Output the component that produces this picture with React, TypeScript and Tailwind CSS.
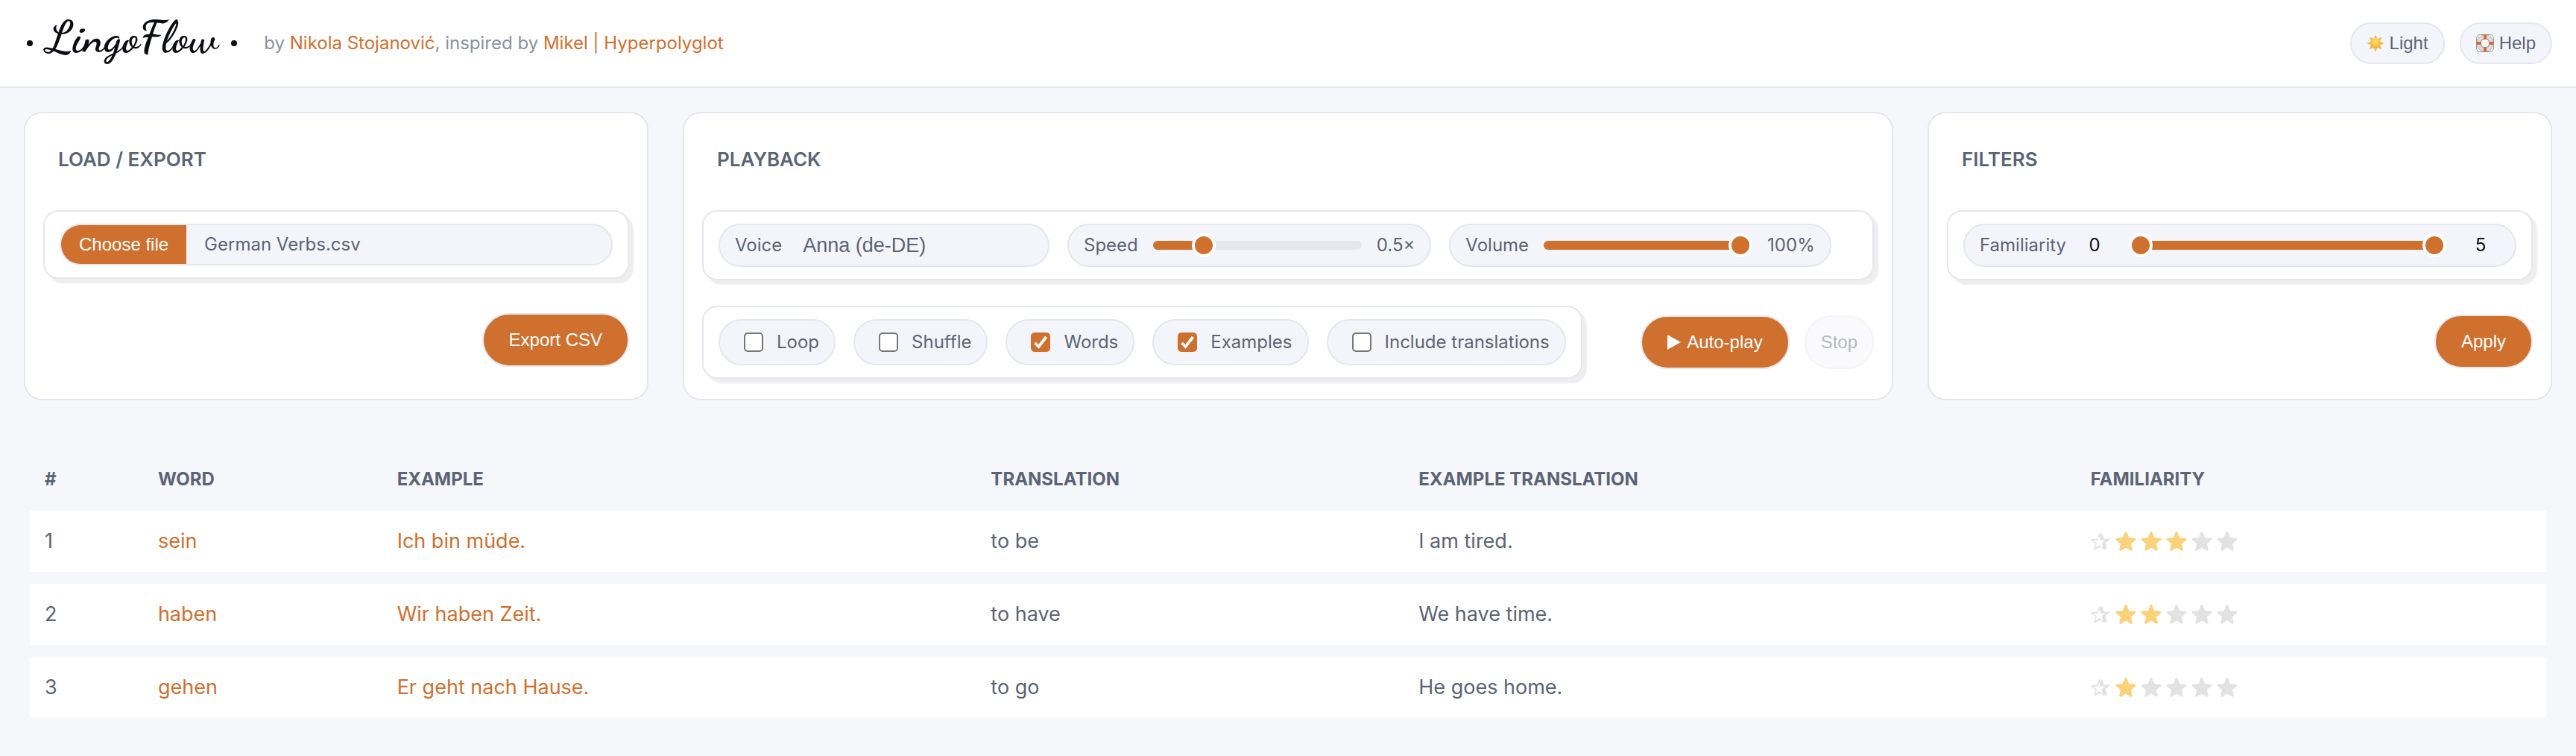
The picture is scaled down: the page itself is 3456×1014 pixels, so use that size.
import { useState } from "react";
import type { CSSProperties, ReactNode } from "react";

const STAR =
  "M12 1c.6 0 1 .4 1.200.9l2.400 6 6.500.5c1.200.1 1.600 1.500.7 2.300l-5 4.200 1.600 6.300c.3 1.200-.9 2-1.900 1.400L12 19.200l-5.500 3.400c-1 .6-2.200-.2-1.900-1.400l1.600-6.300-5-4.200c-.9-.8-.5-2.200.7-2.300l6.500-.5 2.400-6c.2-.5.6-.9 1.200-.9z";

function SunIcon() {
  const rays = [0, 45, 90, 135, 180, 225, 270, 315];
  return (
    <svg viewBox="0 0 24 24" className="size-6" aria-hidden="true">
      <defs>
        <radialGradient id="sun" cx="50%" cy="35%" r="65%">
          <stop offset="0" stopColor="#fde76a" />
          <stop offset="1" stopColor="#f2ae2e" />
        </radialGradient>
      </defs>
      {rays.map((r) => (
        <path key={r} d="M12 .3 14.200 5.200H9.800Z" fill="#efb65e" transform={`rotate(${r} 12 12)`} />
      ))}
      <circle cx="12" cy="12" r="7" fill="url(#sun)" />
    </svg>
  );
}

function LifebuoyIcon() {
  return (
    <svg viewBox="0 0 24 24" className="size-6" aria-hidden="true">
      <rect x=".6" y=".6" width="22.800" height="22.800" rx="5" fill="#fff" stroke="#8f8f8f" strokeWidth="1" />
      <circle cx="12" cy="12" r="8.300" fill="none" stroke="#8f8f8f" strokeWidth="6.400" />
      <circle cx="12" cy="12" r="8.500" fill="none" stroke="#dedede" strokeWidth="5" />
      <circle cx="12" cy="12" r="6.200" fill="none" stroke="#a8a8a8" strokeWidth="1.200" />
      <circle cx="12" cy="12" r="5.200" fill="#f8f8fb" />
      <path d="M10 .8h4v6h-4zM10 17.200h4v6h-4zM.8 10h6v4H.8zM17.200 10h6v4h-6z" fill="#e2642f" />
    </svg>
  );
}

function Star({ on }: { on: boolean }) {
  return (
    <svg viewBox="1 1 22 22" className="size-[26px] overflow-visible" aria-hidden="true">
      <path d={STAR} fill={on ? "#f9d279" : "#e2e2e2"} />
    </svg>
  );
}

function ShadowedStar() {
  const star = "M10.500 2.500 12.800 9.300H20L14.300 13.500 16.400 20.500 10.500 16.300 4.600 20.500 6.700 13.500 1 9.300H8.200Z";
  return (
    <svg viewBox="0 0 24 24" className="size-[26px]" aria-hidden="true">
      <path d={star} fill="#e2e2e2" stroke="#e2e2e2" strokeWidth="1" transform="translate(3.200 .2)" />
      <path d={star} fill="#e2e2e2" stroke="#e2e2e2" strokeWidth="1" transform="translate(1.500 .8)" />
      <path d={star} fill="#fff" stroke="#e2e2e2" strokeWidth="1.300" transform="translate(0 1)" />
    </svg>
  );
}

function Card({ title, children }: { title: string; children: ReactNode }) {
  return (
    <section className="flex min-w-0 flex-col rounded-3xl border-2 border-[#e4e7ee] bg-white px-6 pt-6 pb-[27px]">
      <h2 className="mb-[30px] px-5 py-5 text-[26px] leading-9 font-semibold uppercase">{title}</h2>
      {children}
    </section>
  );
}

function Panel({ children }: { children: ReactNode }) {
  return (
    <div className="flex flex-wrap gap-6 rounded-[20px] border-2 border-[#e4e7ee] bg-white px-5 py-4 shadow-[6px_6px_2px_#eeeeee]">
      {children}
    </div>
  );
}

const pill = "flex items-center rounded-full border-2 border-[#e4e7ee] bg-[#f4f5fb]";
const primary =
  "flex h-[72px] items-center justify-center gap-2 rounded-full border-2 border-[#e4e7ee] bg-[#cf702e] px-[34px] font-['Liberation_Sans',sans-serif] text-2xl text-white";
const thumb =
  "[&::-webkit-slider-thumb]:size-8 [&::-webkit-slider-thumb]:appearance-none [&::-webkit-slider-thumb]:rounded-full [&::-webkit-slider-thumb]:border-4 [&::-webkit-slider-thumb]:border-white [&::-webkit-slider-thumb]:bg-[#cf702e]";

type RangeProps = {
  id: string;
  label: string;
  min: number;
  max: number;
  step: number;
  initial: number;
  format: (v: number) => string;
};

function RangePill({ id, label, min, max, step, initial, format }: RangeProps) {
  const [value, setValue] = useState(initial);
  const fill = { "--fill": `${((value - min) / (max - min)) * 100}%` } as CSSProperties;
  return (
    <div className={`${pill} h-[58px] gap-5 px-5`}>
      <label htmlFor={id}>{label}</label>
      <input
        id={id}
        type="range"
        min={min}
        max={max}
        step={step}
        value={value}
        onChange={(e) => setValue(Number(e.target.value))}
        style={fill}
        className={`h-8 w-[280px] appearance-none bg-transparent [&::-webkit-slider-runnable-track]:h-3 [&::-webkit-slider-runnable-track]:rounded-full [&::-webkit-slider-runnable-track]:bg-[linear-gradient(to_right,#cf702e_var(--fill),#e4e7ee_var(--fill))] [&::-webkit-slider-thumb]:-mt-[10px] ${thumb}`}
      />
      <output htmlFor={id}>{format(value)}</output>
    </div>
  );
}

function CheckPill({ label, initial = false }: { label: string; initial?: boolean }) {
  const [on, setOn] = useState(initial);
  return (
    <label className={`${pill} h-[62px] gap-[18px] pr-5 pl-8`}>
      <span className="grid size-[26px] *:[grid-area:1/1]">
        <input
          type="checkbox"
          checked={on}
          onChange={(e) => setOn(e.target.checked)}
          className="size-[26px] appearance-none rounded-[5px] border-2 border-[#767676] bg-white checked:border-[#cf702e] checked:bg-[#cf702e]"
        />
        {on && (
          <svg viewBox="0 0 26 26" className="pointer-events-none size-[26px]" aria-hidden="true">
            <path d="M5.500 14 10.500 19 20.500 6" fill="none" stroke="#fff" strokeWidth="3.800" />
          </svg>
        )}
      </span>
      {label}
    </label>
  );
}

function FamiliarityFilter() {
  const [low, setLow] = useState(0);
  const [high, setHigh] = useState(5);
  const number = "w-[52px] bg-transparent text-center text-[#0b0d12]";
  const range = `pointer-events-none h-8 w-full appearance-none bg-transparent [&::-webkit-slider-thumb]:pointer-events-auto ${thumb}`;
  return (
    <div className={`${pill} h-[58px] w-full px-5`}>
      <label htmlFor="fam-min" className="mr-3">
        Familiarity
      </label>
      <input id="fam-min" className={number} value={low} onChange={(e) => setLow(Number(e.target.value) || 0)} />
      <div className="mx-5 grid flex-1 items-center *:[grid-area:1/1]">
        <div className="mx-4 h-3 rounded-full bg-[#e4e7ee]">
          <div
            className="h-3 bg-[#cf702e]"
            style={{ marginLeft: `${low * 20}%`, width: `${Math.max(0, high - low) * 20}%` }}
          />
        </div>
        <input
          type="range"
          aria-label="Minimum familiarity"
          min={0}
          max={5}
          value={low}
          onChange={(e) => setLow(Math.min(Number(e.target.value), high))}
          className={range}
        />
        <input
          type="range"
          aria-label="Maximum familiarity"
          min={0}
          max={5}
          value={high}
          onChange={(e) => setHigh(Math.max(Number(e.target.value), low))}
          className={range}
        />
      </div>
      <input
        aria-label="Highest familiarity"
        className={number}
        value={high}
        onChange={(e) => setHigh(Number(e.target.value) || 0)}
      />
    </div>
  );
}

const columns = [
  { name: "#", width: "w-[4.5%]" },
  { name: "Word", width: "w-[9.5%]" },
  { name: "Example", width: "w-[23.6%]" },
  { name: "Translation", width: "w-[17%]" },
  { name: "Example translation", width: "w-[26.7%]" },
  { name: "Familiarity", width: "w-auto" },
];

const words = [
  { word: "sein", example: "Ich bin müde.", translation: "to be", exampleTranslation: "I am tired.", stars: 3 },
  { word: "haben", example: "Wir haben Zeit.", translation: "to have", exampleTranslation: "We have time.", stars: 2 },
  { word: "gehen", example: "Er geht nach Hause.", translation: "to go", exampleTranslation: "He goes home.", stars: 1 },
];

export default function App() {
  const topButton = `${pill} h-14 gap-[7px] px-5 font-['Liberation_Sans',sans-serif]`;
  return (
    <div className="min-h-screen bg-[#f6f7fb] font-[Inter,sans-serif] text-2xl leading-9 text-[#5b6475]">
      <header className="flex flex-wrap items-center border-b-2 border-[#e4e7ee] bg-white px-8 py-[30px]">
        <h1 className="mr-9 ml-1 flex h-14 items-center gap-[18px] pb-4 font-['Dancing_Script',cursive] text-[60px] leading-none font-bold whitespace-nowrap text-[#0b0d12]">
          <span className="mt-4 size-2 rounded-full bg-[#0b0d12]" />
          LingoFlow
          <span className="mt-4 size-2 rounded-full bg-[#0b0d12]" />
        </h1>
        <p className="text-[#8b91a1]">
          by{" "}
          <a href="#author" className="text-[#cf702e]">
            Nikola Stojanović
          </a>
          , inspired by{" "}
          <a href="#inspiration" className="text-[#cf702e]">
            Mikel | Hyperpolyglot
          </a>
        </p>
        <div className="ml-auto flex gap-5">
          <button type="button" className={topButton}>
            <SunIcon />
            Light
          </button>
          <button type="button" className={topButton}>
            <LifebuoyIcon />
            Help
          </button>
        </div>
      </header>

      <main className="px-8 pt-8 pb-9">
        <div className="grid grid-cols-[838fr_1624fr_838fr] gap-[46px]">
          <Card title="Load / Export">
            <Panel>
              <label className={`${pill} h-14 w-full overflow-hidden`}>
                <input type="file" accept=".csv" className="sr-only" />
                <span className="flex h-full items-center bg-[#cf702e] px-6 font-['Liberation_Sans',sans-serif] text-white">
                  Choose file
                </span>
                <span className="px-6">German Verbs.csv</span>
              </label>
            </Panel>
            <div className="mt-[46px] flex justify-end">
              <button type="button" className={primary}>
                Export CSV
              </button>
            </div>
          </Card>

          <Card title="Playback">
            <Panel>
              <div className={`${pill} h-[58px] w-[444px] gap-7 px-5`}>
                <label htmlFor="voice">Voice</label>
                <select
                  id="voice"
                  className="flex-1 appearance-none bg-transparent font-['Liberation_Sans',sans-serif] text-[27px]"
                >
                  <option>Anna (de-DE)</option>
                </select>
              </div>
              <RangePill id="speed" label="Speed" min={0.1} max={2} step={0.1} initial={0.5} format={(v) => `${v}×`} />
              <RangePill id="volume" label="Volume" min={0} max={100} step={1} initial={100} format={(v) => `${v}%`} />
            </Panel>
            <div className="mt-[34px] flex flex-wrap items-center justify-between gap-5">
              <Panel>
                <CheckPill label="Loop" />
                <CheckPill label="Shuffle" />
                <CheckPill label="Words" initial />
                <CheckPill label="Examples" initial />
                <CheckPill label="Include translations" />
              </Panel>
              <div className="flex gap-5">
                <button type="button" className={primary}>
                  <svg viewBox="0 0 18 20" className="h-5 w-[18px]" aria-hidden="true">
                    <path d="M0 0 18 10 0 20Z" fill="#fff" />
                  </svg>
                  Auto-play
                </button>
                <button
                  type="button"
                  disabled
                  className={`${pill} h-[72px] px-5 font-['Liberation_Sans',sans-serif] opacity-45`}
                >
                  Stop
                </button>
              </div>
            </div>
          </Card>

          <Card title="Filters">
            <Panel>
              <FamiliarityFilter />
            </Panel>
            <div className="mt-[46px] flex justify-end">
              <button type="button" className={primary}>
                Apply
              </button>
            </div>
          </Card>
        </div>

        <div className="mt-16 px-2">
          <table className="w-full table-fixed border-separate border-spacing-x-0 border-spacing-y-4 text-left">
            <thead>
              <tr>
                {columns.map((c) => (
                  <th key={c.name} scope="col" className={`${c.width} px-5 pt-2 pb-2 font-bold uppercase`}>
                    {c.name}
                  </th>
                ))}
              </tr>
            </thead>
            <tbody className="text-[27px]">
              {words.map((w, i) => (
                <tr key={w.word} className="h-[82px] bg-white">
                  <td className="px-5">{i + 1}</td>
                  <td className="px-5 text-[#cf702e]">{w.word}</td>
                  <td className="px-5 text-[#cf702e]">{w.example}</td>
                  <td className="px-5">{w.translation}</td>
                  <td className="px-5">{w.exampleTranslation}</td>
                  <td className="px-5">
                    <div className="flex items-center gap-2">
                      <button type="button" aria-label={`Reset ${w.word}`}>
                        <ShadowedStar />
                      </button>
                      {[1, 2, 3, 4, 5].map((n) => (
                        <button key={n} type="button" aria-label={`Rate ${w.word} ${n}`}>
                          <Star on={n <= w.stars} />
                        </button>
                      ))}
                    </div>
                  </td>
                </tr>
              ))}
            </tbody>
          </table>
        </div>
      </main>
    </div>
  );
}
